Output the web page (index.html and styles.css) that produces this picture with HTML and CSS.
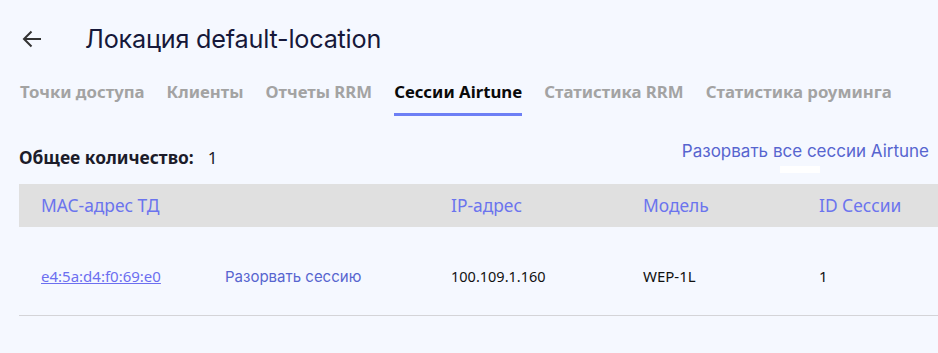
FILE: index.html
```html
<!DOCTYPE html>
<html lang="ru">
<head>
<meta charset="utf-8">
<link rel="stylesheet" href="styles.css">
</head>
<body>
<div class="page">
  <header class="title-row">
    <svg class="back" width="20" height="18" viewBox="0 0 20 18"><path d="M19 9H2M9.5 1.5L2 9l7.5 7.5" fill="none" stroke="#333" stroke-width="2"/></svg>
    <h1 class="title">Локация default-location</h1>
  </header>
  <nav class="tabs">
    <span class="tab">Точки доступа</span>
    <span class="tab">Клиенты</span>
    <span class="tab">Отчеты RRM</span>
    <span class="tab active">Сессии Airtune</span>
    <span class="tab">Статистика RRM</span>
    <span class="tab">Статистика роуминга</span>
  </nav>
  <div class="summary">
    <div class="total"><b>Общее количество:</b><span class="num">1</span></div>
    <div class="actions">
      <a class="break-all">Разорвать все сессии Airtune</a>
      <span class="chip"></span>
    </div>
  </div>
  <div class="table">
    <div class="row head">
      <span>MAC-адрес ТД</span><span></span><span>IP-адрес</span><span>Модель</span><span>ID Сессии</span>
    </div>
    <div class="row body">
      <a class="mac">e4:5a:d4:f0:69:e0</a><a class="break">Разорвать сессию</a><span class="ip">100.109.1.160</span><span>WEP-1L</span><span>1</span>
    </div>
  </div>
</div>
</body>
</html>
```
FILE: styles.css
```css
html, body { margin: 0; padding: 0; background: #f5f8ff; }
body { font-family: "Noto Sans", sans-serif; color: #1a1a2a; overflow: hidden; }
.page { width: 938px; height: 353px; }
.title-row { display: flex; align-items: center; height: 32px; padding: 23px 0 0 22px; }
.back { margin-right: 43px; }
.title { margin: 0; font-family: "Inter", sans-serif; font-weight: 400; font-size: 25.2px; color: #16183a; letter-spacing: -0.2px; }
.tabs { display: flex; gap: 22px; padding: 26px 0 0 20px; }
.tab { font-family: "Noto Sans", sans-serif; font-weight: 700; font-size: 16.75px; color: #a3a3a3; padding-bottom: 10px; border-bottom: 3px solid transparent; line-height: 22px; }
.tab.active { color: #0a0a0a; border-bottom-color: #6d7ff5; }
.summary { display: flex; justify-content: space-between; padding: 24px 9px 0 19px; height: 68px; box-sizing: border-box; }
.total { font-size: 17.4px; line-height: 22px; padding-top: 6px; color: #1c1c2a; }
.total b { font-weight: 700; }
.num { margin-left: 14px; font-size: 17px; }
.actions { display: flex; flex-direction: column; align-items: flex-end; }
.break-all { font-family: "Inter", sans-serif; font-size: 17px; color: #5765cf; line-height: 22px; }
.chip { width: 40px; height: 7px; background: #fff; margin: 4px 109px 0 0; }
.table { margin-left: 19px; }
.row { display: grid; grid-template-columns: 184px 226px 192px 176px 1fr; padding-left: 22px; align-items: center; }
.row.head { height: 43px; background: #e0e0e0; color: #6b74ee; font-size: 17.4px; line-height: 22px; padding-bottom: 2px; box-sizing: border-box; }
.row.body { height: 89px; box-sizing: border-box; padding-top: 10px; border-bottom: 1px solid #d4d4d8; font-size: 15px; color: #111; }
.ip { font-size: 14.5px; }
.mac { color: #6c6ff0; text-decoration: underline; }
.break { font-family: "Inter", sans-serif; color: #5765cf; font-size: 15px; }
```
